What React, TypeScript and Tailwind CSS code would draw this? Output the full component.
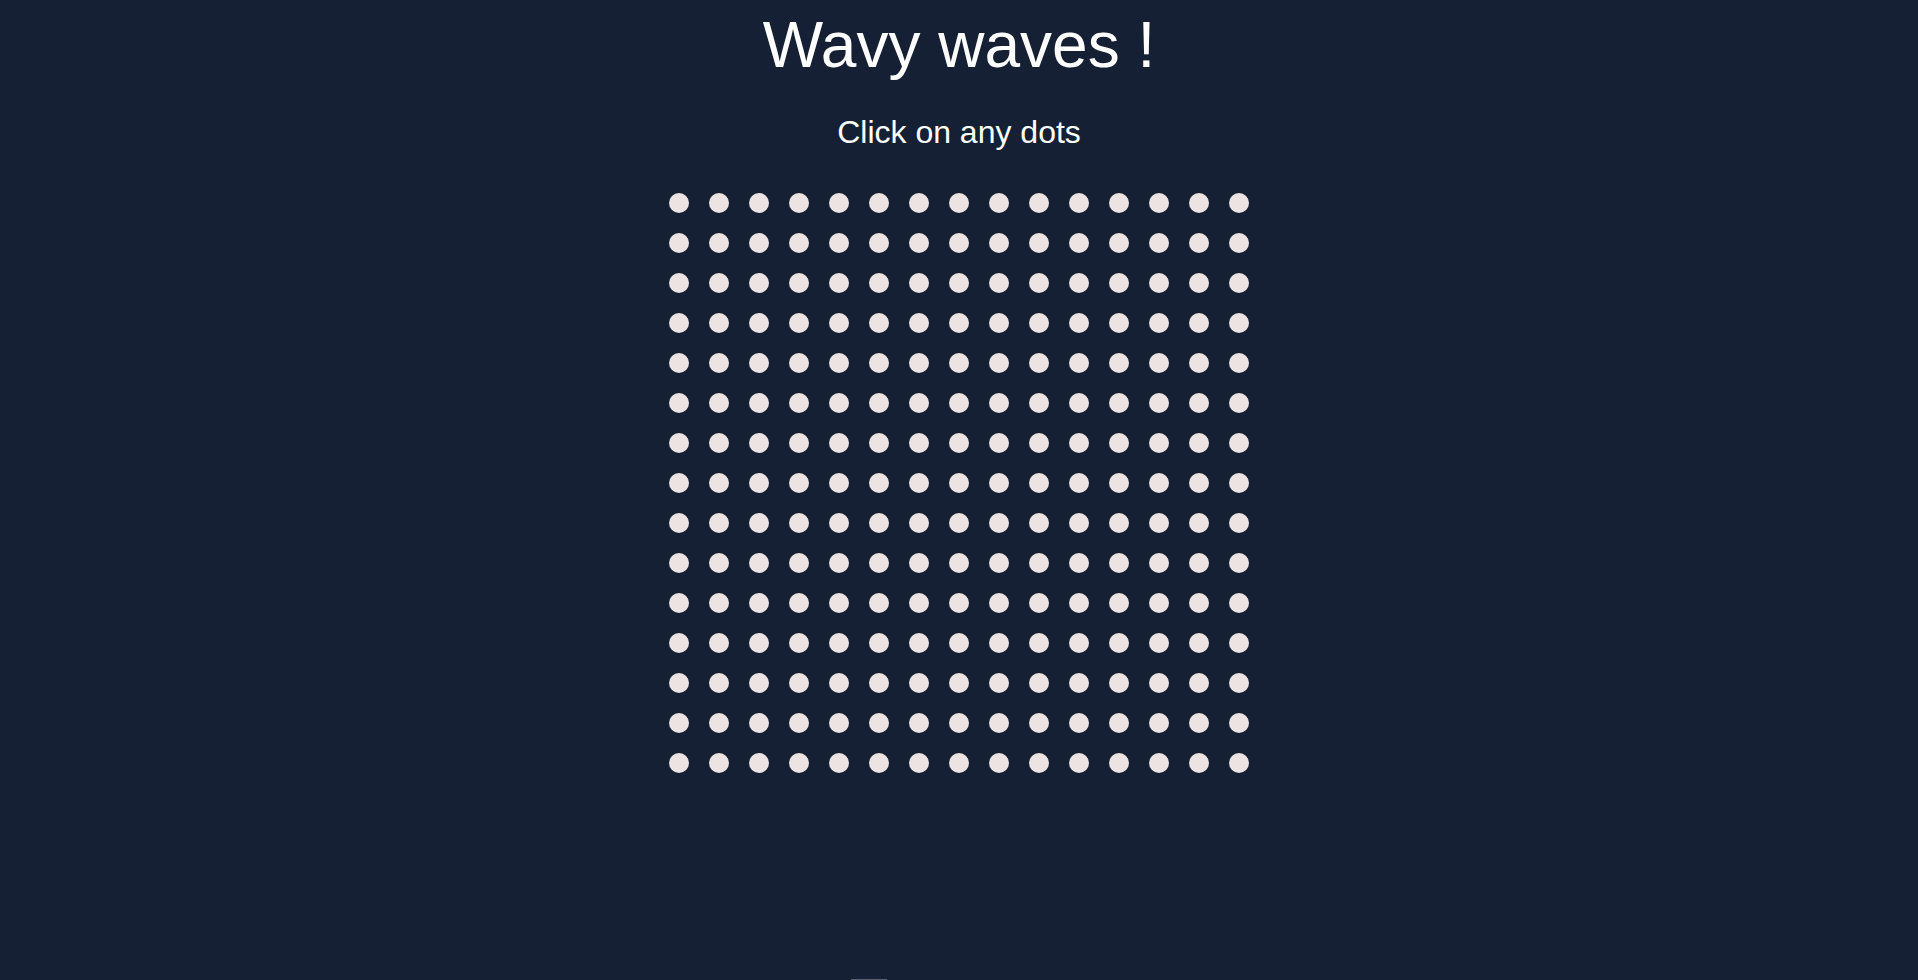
import React, { useState } from 'react';

const SIZE = 15;

export default function App() {
  const [active, setActive] = useState<number | null>(null);

  return (
    <div className="min-h-screen bg-[#162034] flex flex-col items-center font-['Liberation_Sans',Arial,sans-serif] text-white">
      <h1 className="mt-[8px] text-[64px] leading-[74px]">Wavy waves !</h1>
      <p className="mt-[32px] text-[32px] leading-[36px]">Click on any dots</p>

      <div className="mt-[43px] grid grid-cols-[repeat(15,20px)] gap-[20px]">
        {Array.from({ length: SIZE * SIZE }).map((_, i) => (
          <button
            key={i}
            type="button"
            onClick={() => setActive(i)}
            className={
              active === i
                ? 'w-[20px] h-[20px] rounded-full bg-[#ede3e3] scale-110'
                : 'w-[20px] h-[20px] rounded-full bg-[#ede3e3]'
            }
          />
        ))}
      </div>

      {/* little scrollbar stub at the bottom */}
      <div className="mt-auto flex w-full justify-center">
        <div className="ml-[-180px] w-[36px] h-[1px] bg-[#5a6070]" />
      </div>
    </div>
  );
}
